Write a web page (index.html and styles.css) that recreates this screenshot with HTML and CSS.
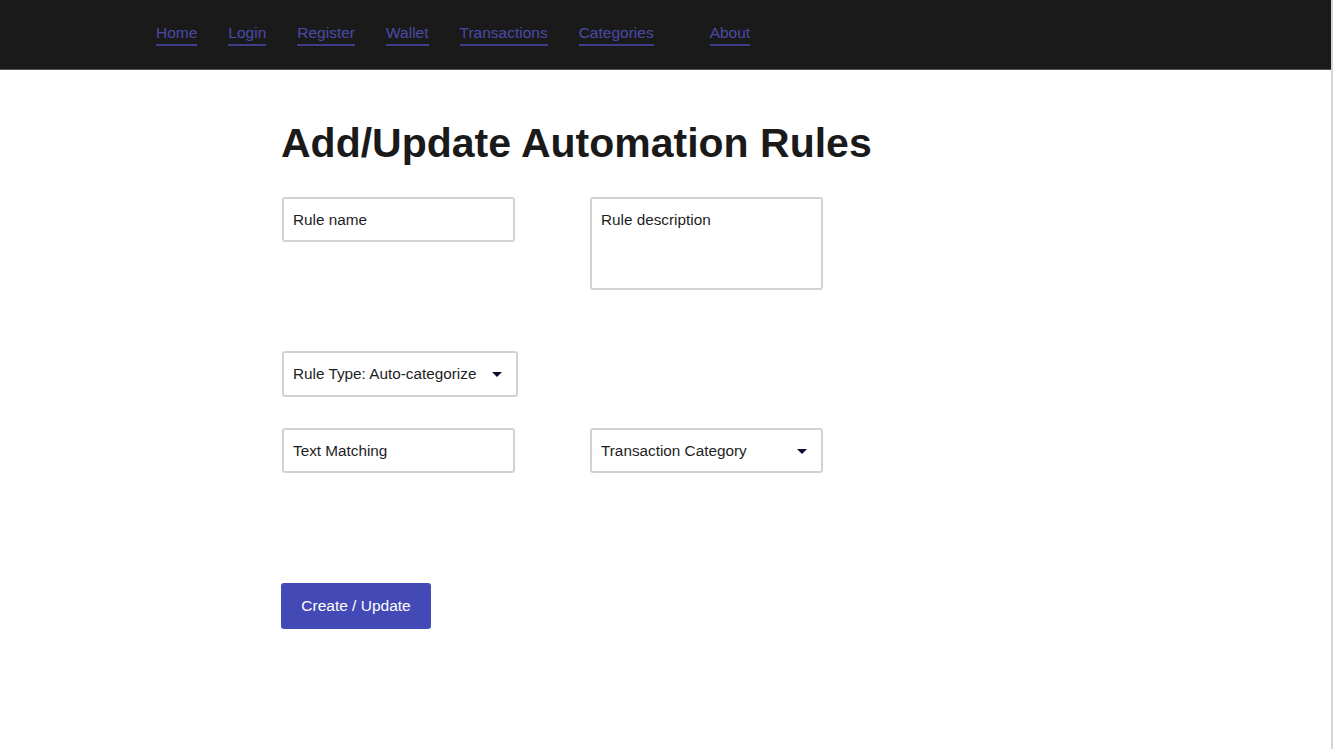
FILE: index.html
```html
<!DOCTYPE html>
<html>
<head>
<meta charset="utf-8">
<link rel="stylesheet" href="styles.css">
</head>
<body>
<header class="topbar">
  <nav class="nav">
    <a class="nav-link" href="#">Home</a>
    <a class="nav-link" href="#">Login</a>
    <a class="nav-link" href="#">Register</a>
    <a class="nav-link" href="#">Wallet</a>
    <a class="nav-link" href="#">Transactions</a>
    <a class="nav-link" href="#">Categories</a>
    <a class="nav-link nav-about" href="#">About</a>
  </nav>
</header>
<main class="content">
  <h1 class="title">Add/Update Automation Rules</h1>
  <div class="row row-first">
    <div class="field">Rule name</div>
    <div class="field field-tall">Rule description</div>
  </div>
  <div class="row row-select">
    <div class="field field-select field-wide">Rule Type: Auto-categorize <span class="caret"></span></div>
  </div>
  <div class="row row-third">
    <div class="field">Text Matching</div>
    <div class="field field-select">Transaction Category <span class="caret"></span></div>
  </div>
  <button class="btn">Create / Update</button>
</main>
</body>
</html>
```
FILE: styles.css
```css
html, body {
  margin: 0;
  padding: 0;
  background: #ffffff;
  font-family: "Liberation Sans", Arial, sans-serif;
  color: #1c1c1c;
}
body {
  border-right: 2px solid #d4d4d4;
  min-height: 749px;
  box-sizing: border-box;
}
.topbar {
  height: 70px;
  background: #1b1a1b;
  border-bottom: 1px solid #555;
  box-sizing: border-box;
}
.nav {
  display: flex;
  align-items: flex-start;
  padding-left: 156px;
  padding-top: 24px;
  gap: 31px;
}
.nav-link {
  color: #4a4aa6;
  font-size: 15.5px;
  line-height: 18px;
  text-decoration: none;
  padding-bottom: 2px;
  border-bottom: 2px solid #3d3d8a;
}
.nav-about {
  margin-left: 25px;
}
.content {
  padding-left: 282px;
  padding-top: 48px;
}
.title {
  margin: 0 0 0 -1px;
  font-size: 41px;
  line-height: 50px;
  font-weight: 700;
  color: #1a1a1a;
}
.row {
  display: flex;
  gap: 75px;
  align-items: flex-start;
}
.row-first {
  margin-top: 29px;
}
.row-select {
  margin-top: 61px;
}
.row-third {
  margin-top: 31px;
}
.field {
  width: 233px;
  height: 45px;
  box-sizing: border-box;
  border: 2px solid #d2d2d2;
  border-radius: 3px;
  padding: 12px 10px 0 9px;
  font-size: 15.3px;
  line-height: 18px;
  color: #1e1e1e;
  position: relative;
}
.field-tall {
  height: 93px;
}
.field-wide {
  width: 236px;
  height: 46px;
}
.caret {
  position: absolute;
  right: 14px;
  top: 19px;
  width: 0;
  height: 0;
  border-left: 5px solid transparent;
  border-right: 5px solid transparent;
  border-top: 5px solid #0d0b30;
}
.btn {
  display: block;
  margin: 110px 0 0 -1px;
  width: 150px;
  height: 46px;
  background: #4349b5;
  color: #ffffff;
  border: none;
  border-radius: 3px;
  font-family: "Liberation Sans", Arial, sans-serif;
  font-size: 15.5px;
  padding: 0;
}
```
